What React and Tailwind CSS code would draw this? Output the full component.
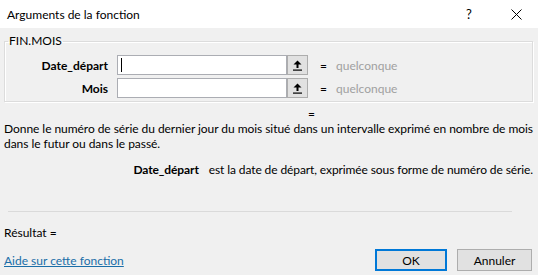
import React from 'react';

function UpButton(){
  return (
    <button className="w-[21px] h-[20px] border border-[#adadad] bg-[#e1e1e1] flex items-center justify-center">
      <svg width="9" height="11" viewBox="0 0 9 11">
        <path d="M4.5 0.5 L8.5 4.5 L5.5 4.5 L5.5 8 L3.5 8 L3.5 4.5 L0.5 4.5 Z" fill="#000"/>
        <rect x="0" y="9.5" width="9" height="1.2" fill="#000"/>
      </svg>
    </button>
  );
}

function ArgRow({label, focused}){
  return (
    <div className="flex items-center h-[20px]">
      <div className="w-[102px] text-right font-bold">{label}</div>
      <div className="ml-[9px] w-[170px] h-[20px] bg-white border border-[#abadb3] flex items-center pl-[3px]">
        {focused && <div className="w-px h-[14px] bg-black"></div>}
      </div>
      <UpButton/>
      <div className="ml-[12px]">=</div>
      <div className="ml-[9px] text-[#a0a0a0]">quelconque</div>
    </div>
  );
}

export default function App(){
  return (
    <div className="w-[538px] h-[275px] bg-[#f0f0f0] flex flex-col text-[12px] leading-[15px] text-black font-['Segoe_UI','Lato',sans-serif] overflow-hidden">
      <div className="h-[28px] bg-white flex items-center pl-[7px] shrink-0">
        <div className="flex-1">Arguments de la fonction</div>
        <div className="w-[12px] mr-[33px] text-[13px]">?</div>
        <svg width="11" height="11" viewBox="0 0 11 11" className="mr-[16px]">
          <path d="M0.5 0.5 L10.5 10.5 M10.5 0.5 L0.5 10.5" stroke="#000" strokeWidth="1"/>
        </svg>
      </div>

      <div className="px-[4px]">
        <fieldset className="mt-[5px] w-[529px] border border-[#dcdcdc] shadow-[inset_1px_1px_0_#fff,1px_1px_0_#fff] pl-[1px] pt-[6px] pb-[3px] flex flex-col gap-[3px]">
          <legend className="ml-[2px] px-px leading-[16px]">FIN.MOIS</legend>
          <ArgRow label="Date_départ" focused/>
          <ArgRow label="Mois"/>
        </fieldset>

        <div className="mt-[4px] pl-[304px]">=</div>
        <div className="tracking-[-0.05px]">Donne le numéro de série du dernier jour du mois situé dans un intervalle exprimé en nombre de mois dans le futur ou dans le passé.</div>
        <div className="mt-[11px] flex justify-end pr-[1px] tracking-[-0.1px]">
          <span className="font-bold">Date_départ</span>
          <span className="ml-[10px]">est la date de départ, exprimée sous forme de numéro de série.</span>
        </div>

        <div className="mt-[34px] ml-[4px] w-[504px] h-px bg-[#dadada]"></div>
        <div className="mt-[13px]">Résultat =</div>

        <div className="mt-[9px] flex items-center">
          <a href="#" className="flex-1 text-[#1a6ea8] underline">Aide sur cette fonction</a>
          <button className="w-[72px] h-[22px] bg-[#e1e1e1] border-2 border-[#0078d7]">OK</button>
          <button className="ml-[10px] mr-[2px] w-[75px] h-[22px] bg-[#e1e1e1] border border-[#adadad]">Annuler</button>
        </div>
      </div>
    </div>
  );
}
